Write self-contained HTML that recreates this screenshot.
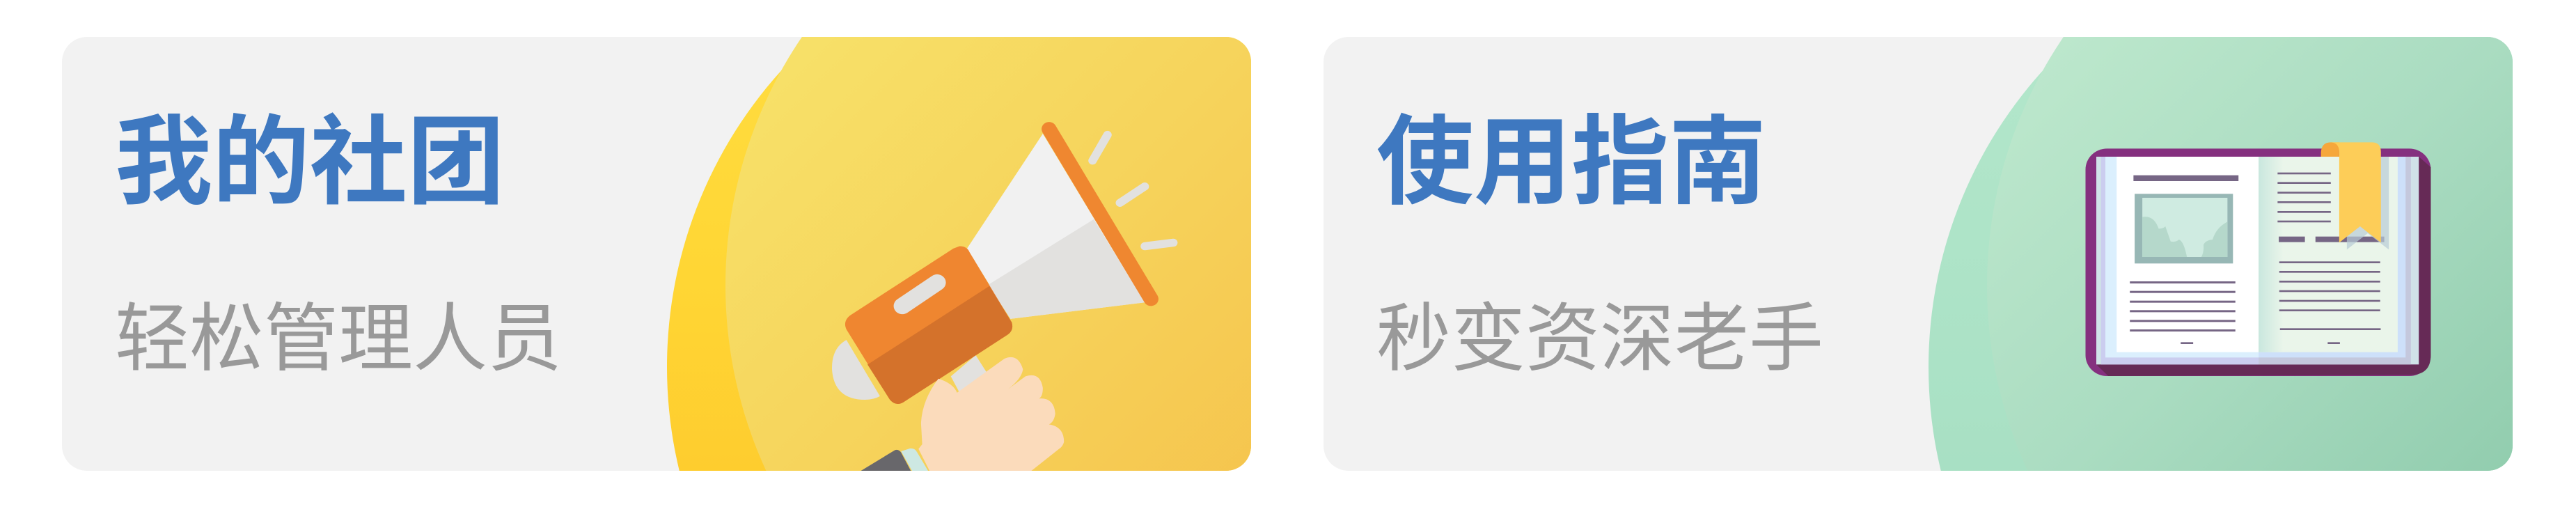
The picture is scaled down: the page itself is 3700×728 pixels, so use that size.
<!DOCTYPE html>
<html><head><meta charset="utf-8"><style>
html,body{margin:0;padding:0;background:#fff;width:3700px;height:728px;overflow:hidden;}
.card{position:absolute;top:53px;width:1708px;height:623px;background:#f2f2f2;border-radius:36px;overflow:hidden;}
.c{position:absolute;border-radius:50%;}
.t{position:absolute;left:76px;top:110px;font-family:"Liberation Sans","Noto Sans CJK SC",sans-serif;font-weight:bold;font-size:140px;line-height:1;color:#3e78c0;white-space:nowrap;}
.s{position:absolute;left:76px;top:380px;font-family:"Liberation Sans","Noto Sans CJK SC",sans-serif;font-size:107px;line-height:1;color:#999;white-space:nowrap;}
svg{position:absolute;}
</style></head><body>
<div class="card" style="left:89px">
  <div class="c" style="left:869px;top:-160px;width:1268px;height:1268px;background:linear-gradient(180deg,#ffdf45,#ffd634 40%,#fec72b 75%);"></div>
  <div class="c" style="left:953px;top:-278px;width:1270px;height:1270px;background:linear-gradient(135deg,#f8e870 0%,#f6d45c 40%,#f5c049 75%);"></div>
  <div class="t">我的社团</div>
  <div class="s">轻松管理人员</div>
  <svg style="left:1091px;top:107px" width="560" height="520" viewBox="0 0 1568 1545" preserveAspectRatio="none">
    <path d="M890,95 L1300,815 L760,885 L585,585 Z" fill="#f1f1f1"/>
    <path d="M670,740 L1095,460 L1300,815 L760,885 Z" fill="#e2e1df"/>
    <line x1="915" y1="75" x2="1325" y2="800" stroke="#ef8730" stroke-width="60" stroke-linecap="round"/>
    <g stroke="#e2e1df" stroke-width="34" stroke-linecap="round">
      <line x1="1150" y1="100" x2="1090" y2="210"/>
      <line x1="1300" y1="320" x2="1200" y2="390"/>
      <line x1="1415" y1="560" x2="1300" y2="575"/>
    </g>
    <path d="M100,975 Q40,1010 42,1100 Q50,1230 175,1230 Q210,1230 235,1215 Z" fill="#e2e1df"/>
    <path d="M620,1040 L665,1115 L560,1210 L520,1130 Z" fill="#e2e1df"/>
    <path d="M555,575 Q585,575 595,600 L765,900 Q775,935 745,955 L330,1240 Q300,1260 275,1230 L100,930 Q85,895 115,870 L530,585 Z" fill="#ef8630"/>
    <path d="M185,1080 L675,745 L765,900 Q775,935 745,955 L330,1240 Q300,1260 275,1230 Z" fill="#d4722b"/>
    <line x1="465" y1="730" x2="325" y2="830" stroke="#e2e1df" stroke-width="70" stroke-linecap="round"/>
    <path d="M440,1545 L390,1440 L405,1420 L400,1330 Q405,1230 470,1140 Q530,1160 545,1200 L735,1055 Q790,1030 810,1100 Q805,1140 750,1185 L820,1130 Q880,1110 890,1180 Q890,1215 875,1225 Q935,1220 940,1290 Q935,1325 915,1335 Q975,1345 975,1410 Q970,1430 955,1440 L830,1545 Z" fill="#fbdbbb"/>
    <path d="M140,1545 L295,1445 Q310,1440 320,1455 L365,1545 Z" fill="#68676b"/>
    <path d="M320,1450 L355,1438 Q375,1435 385,1455 L435,1545 L370,1545 Z" fill="#cde8e2"/>
  </svg>
</div>
<div class="card" style="left:1901px">
  <div class="c" style="left:869px;top:-160px;width:1268px;height:1268px;background:linear-gradient(180deg,#b5e8cc,#abe2c6 50%,#9fd8bb);"></div>
  <div class="c" style="left:953px;top:-278px;width:1270px;height:1270px;background:linear-gradient(135deg,#c7eed3 0%,#aadcc1 40%,#88c7a7 75%);"></div>
  <div class="t">使用指南</div>
  <div class="s">秒变资深老手</div>
  <svg style="left:1079px;top:137px" width="540" height="370" viewBox="0 0 1568 1110" preserveAspectRatio="none">
    <defs><linearGradient id="sp" x1="0" x2="1" y1="0" y2="0"><stop offset="0" stop-color="#c9e7de"/><stop offset="1" stop-color="#eaf5ea"/></linearGradient></defs>
    <rect x="45" y="70" width="1440" height="980" rx="90" fill="#85307f"/>
    <path d="M90,1000 L1435,1000 L1435,105 L1485,150 L1485,960 Q1485,1045 1400,1045 L140,1050 Z" fill="#662a56"/>
    <rect x="90" y="105" width="1345" height="895" fill="#d0e2e8"/>
    <rect x="110" y="105" width="1292" height="895" fill="#c4c8dd"/>
    <rect x="110" y="105" width="657" height="895" fill="#cbcdef"/>
    <rect x="128" y="105" width="1252" height="865" fill="#cde0fa"/>
    <rect x="128" y="105" width="639" height="865" fill="#dbeffd"/>
    <rect x="175" y="105" width="592" height="842" fill="#fff"/>
    <rect x="767" y="105" width="580" height="842" fill="#eaf5ea"/>
    <rect x="767" y="105" width="103" height="842" fill="url(#sp)"/>
    <rect x="245" y="185" width="438" height="25" fill="#766685"/>
    <rect x="250" y="265" width="410" height="300" fill="#97b7b5"/>
    <rect x="282" y="282" width="355" height="255" fill="#cfebe1"/>
    <path d="M282,365 Q330,355 350,415 Q370,415 378,405 L400,470 Q420,475 435,462 Q455,470 468,537 L528,537 Q540,515 537,485 Q545,465 575,462 Q590,410 637,385 L637,537 L282,537 Z" fill="#b5d8cb"/>
    <g fill="#766685">
      <rect x="230" y="642" width="440" height="9"/><rect x="230" y="683" width="440" height="9"/><rect x="230" y="725" width="440" height="9"/><rect x="230" y="766" width="440" height="9"/><rect x="230" y="808" width="440" height="9"/><rect x="230" y="849" width="440" height="9"/>
      <rect x="442" y="904" width="52" height="8"/><rect x="1055" y="904" width="51" height="8"/>
      <rect x="846" y="173" width="222" height="8"/><rect x="846" y="214" width="222" height="8"/><rect x="846" y="256" width="222" height="8"/><rect x="846" y="297" width="222" height="8"/><rect x="846" y="339" width="222" height="8"/><rect x="846" y="380" width="222" height="8"/>
      <rect x="851" y="449" width="109" height="24"/><rect x="1004" y="449" width="287" height="24"/>
      <rect x="853" y="556" width="421" height="8"/><rect x="853" y="597" width="421" height="8"/><rect x="853" y="639" width="421" height="8"/><rect x="853" y="680" width="421" height="8"/><rect x="853" y="722" width="421" height="8"/><rect x="853" y="763" width="421" height="8"/><rect x="856" y="844" width="420" height="8"/>
    </g>
    <path d="M1135,105 L1310,105 L1310,505 L1222,435 L1135,505 Z" fill="#b8ccd6" opacity="0.7"/>
    <path d="M1027,105 L1027,85 Q1030,43 1068,43 L1103,43 L1103,105 Z" fill="#f6a73b"/>
    <path d="M1065,43 L1240,43 Q1277,43 1277,85 L1277,475 L1190,405 L1103,475 L1103,80 Q1100,43 1065,43 Z" fill="#fdcd58"/>
  </svg>
</div>
</body></html>
